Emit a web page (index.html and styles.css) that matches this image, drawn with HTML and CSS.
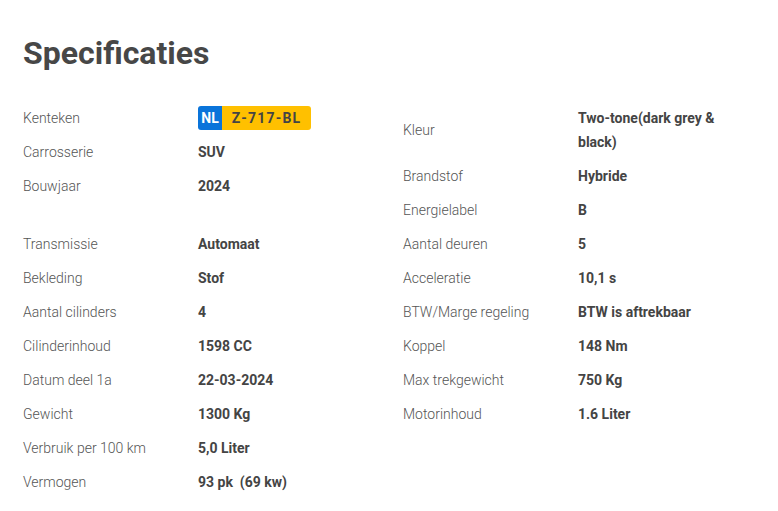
FILE: index.html
```html
<!DOCTYPE html>
<html lang="nl">
<head>
<meta charset="utf-8">
<title>Specificaties</title>
<link rel="stylesheet" href="styles.css">
</head>
<body>
<section class="specs">
  <h1 class="specs-title">Specificaties</h1>
  <div class="specs-grid">
    <dl class="spec-col spec-col-left">
      <div class="spec-row"><dt>Kenteken</dt><dd><span class="plate"><span class="plate-nl">NL</span><span class="plate-num">Z-717-BL</span></span></dd></div>
      <div class="spec-row"><dt>Carrosserie</dt><dd>SUV</dd></div>
      <div class="spec-row spec-row-tall"><dt>Bouwjaar</dt><dd>2024</dd></div>
      <div class="spec-row"><dt>Transmissie</dt><dd>Automaat</dd></div>
      <div class="spec-row"><dt>Bekleding</dt><dd>Stof</dd></div>
      <div class="spec-row"><dt>Aantal cilinders</dt><dd>4</dd></div>
      <div class="spec-row"><dt>Cilinderinhoud</dt><dd>1598 CC</dd></div>
      <div class="spec-row"><dt>Datum deel 1a</dt><dd>22-03-2024</dd></div>
      <div class="spec-row"><dt>Gewicht</dt><dd>1300 Kg</dd></div>
      <div class="spec-row"><dt>Verbruik per 100 km</dt><dd>5,0 Liter</dd></div>
      <div class="spec-row"><dt>Vermogen</dt><dd>93 pk&nbsp; (69 kw)</dd></div>
    </dl>
    <dl class="spec-col spec-col-right">
      <div class="spec-row spec-row-center"><dt>Kleur</dt><dd>Two-tone(dark grey &amp; black)</dd></div>
      <div class="spec-row"><dt>Brandstof</dt><dd>Hybride</dd></div>
      <div class="spec-row"><dt>Energielabel</dt><dd>B</dd></div>
      <div class="spec-row"><dt>Aantal deuren</dt><dd>5</dd></div>
      <div class="spec-row"><dt>Acceleratie</dt><dd>10,1 s</dd></div>
      <div class="spec-row"><dt>BTW/Marge regeling</dt><dd>BTW is aftrekbaar</dd></div>
      <div class="spec-row"><dt>Koppel</dt><dd>148 Nm</dd></div>
      <div class="spec-row"><dt>Max trekgewicht</dt><dd>750 Kg</dd></div>
      <div class="spec-row"><dt>Motorinhoud</dt><dd>1.6 Liter</dd></div>
    </dl>
  </div>
</section>
</body>
</html>
```

FILE: styles.css
```css
html, body {
  margin: 0;
  padding: 0;
  background: #ffffff;
}
body {
  font-family: Roboto, "Liberation Sans", Arial, sans-serif;
  color: #444444;
}
.specs {
  padding: 34px 0 0 23px;
}
.specs-title {
  margin: 0;
  font-size: 32px;
  line-height: 38px;
  font-weight: 700;
  color: #474747;
}
.specs-grid {
  display: grid;
  grid-template-columns: 380px 352px;
  margin-top: 34px;
}
.spec-col {
  margin: 0;
  display: flex;
  flex-direction: column;
  gap: 10px;
}
.spec-row {
  display: grid;
  grid-template-columns: 175px 1fr;
  align-items: start;
  font-size: 14px;
  line-height: 24px;
}
.spec-row-tall {
  min-height: 48px;
}
.spec-row-center {
  align-items: center;
}
.spec-row dt {
  font-weight: 300;
  color: #555555;
}
.spec-row dd {
  margin: 0;
  font-weight: 700;
  color: #444444;
}
.plate {
  display: inline-flex;
  height: 24px;
  vertical-align: top;
  border-radius: 3px;
  overflow: hidden;
  font-size: 14px;
  font-weight: 700;
  line-height: 24px;
}
.plate-nl {
  background: #0a74da;
  color: #ffffff;
  width: 24px;
  text-align: center;
}
.plate-num {
  background: #ffc000;
  color: #444444;
  width: 89px;
  text-align: center;
  letter-spacing: 1.2px;
}
```
